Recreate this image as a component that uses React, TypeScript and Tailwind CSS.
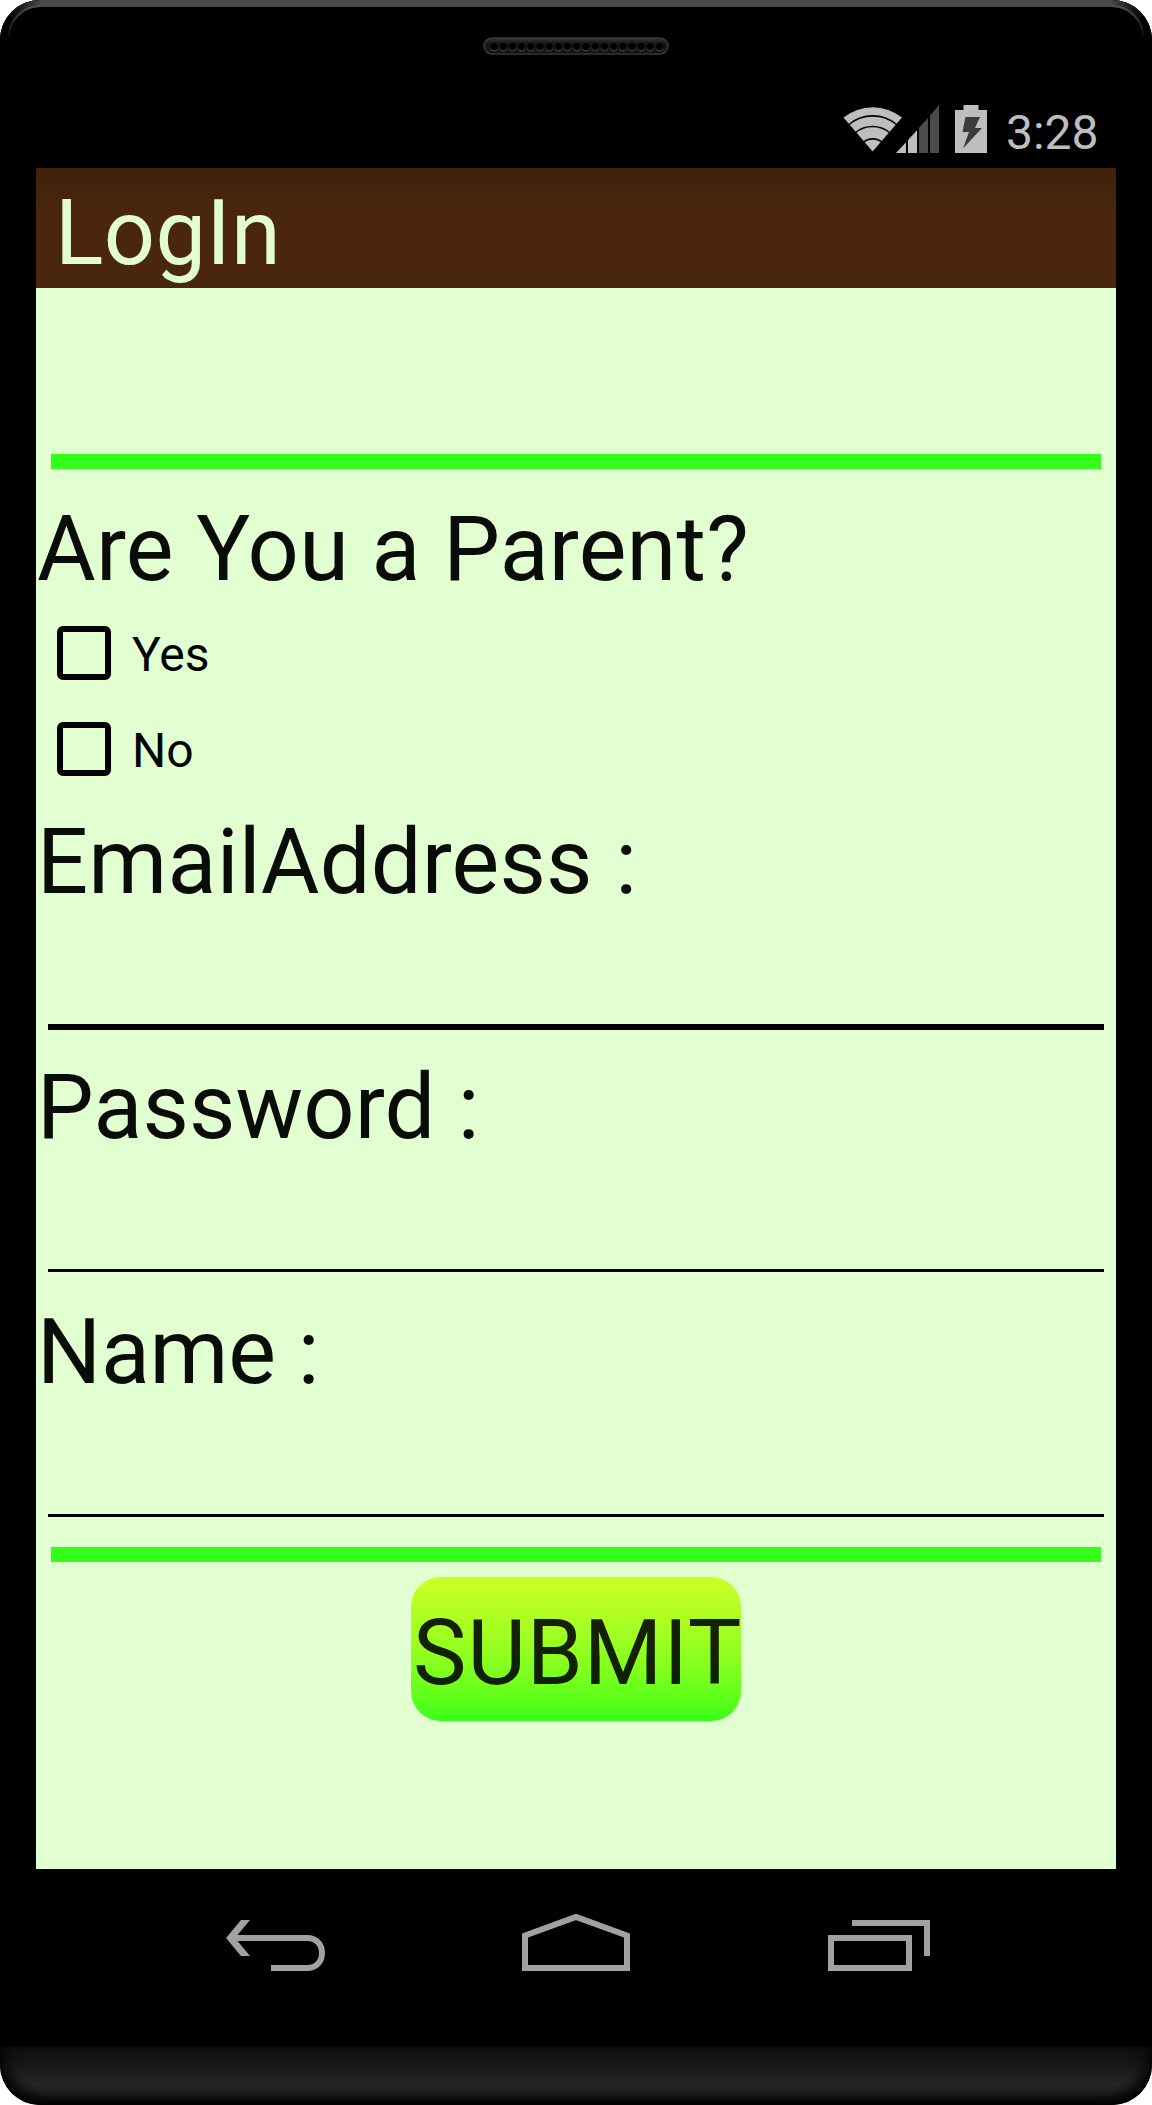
import React from "react";

function Speaker() {
  return (
    <svg width="186" height="18" viewBox="0 0 186 18">
      <defs>
        <linearGradient id="sp" x1="0" y1="0" x2="0" y2="1">
          <stop offset="0" stopColor="#383838" />
          <stop offset="0.3" stopColor="#1a1a1a" />
          <stop offset="1" stopColor="#111" />
        </linearGradient>
        <linearGradient id="rim" x1="0" y1="0" x2="0" y2="1">
          <stop offset="0.3" stopColor="#000" />
          <stop offset="1" stopColor="#555" />
        </linearGradient>
      </defs>
      <rect x="1" y="1" width="184" height="16" rx="8" fill="url(#sp)" stroke="#363636" strokeWidth="1.6" />
      {Array.from({ length: 19 }, (_, i) => (
        <circle key={i} cx={11 + i * 9.2} cy="10.3" r="3.7" fill="#000" stroke="url(#rim)" strokeWidth="1" />
      ))}
    </svg>
  );
}

function CornerBevel({ className }: { className: string }) {
  return (
    <svg width="40" height="44" viewBox="0 0 40 44" className={`absolute top-0 ${className}`}>
      <defs>
        <linearGradient id="bevel" x1="0" y1="0" x2="1" y2="0">
          <stop offset="0.2" stopColor="#000" />
          <stop offset="1" stopColor="#484848" />
        </linearGradient>
        <linearGradient id="bevelEdge" x1="0" y1="0" x2="0" y2="1">
          <stop offset="0" stopColor="#505050" />
          <stop offset="1" stopColor="#000" />
        </linearGradient>
      </defs>
      <rect width="40" height="44" fill="#000" />
      <path d="M0 40A40 40 0 0 1 40 0V7A33 33 0 0 0 7 40Z" fill="url(#bevel)" />
      <path d="M8.5 40A31.5 33 0 0 1 40 6" fill="none" stroke="url(#bevelEdge)" strokeWidth="2" />
    </svg>
  );
}

function StatusIcons() {
  return (
    <svg width="148" height="52" viewBox="840 102 148 52">
      <path d="M843.5 117.5A47 47 0 0 1 902 117.5L872.6 151.5Z" fill="#bebebe" />
      <g fill="none" stroke="#000" strokeWidth="1.6">
        <path d="M849 124.5A37 37 0 0 1 896.5 124.5" />
        <path d="M855.5 132.5A27 27 0 0 1 889.5 132.5" />
        <path d="M863 142.5A15 15 0 0 1 882.5 142.5" />
      </g>
      <path d="M896 153L906 142.2V153Z M908 140L917 130.2V153H908Z" fill="#bebebe" />
      <path d="M919 127.8L928 118V153H919Z M930 115.7L939 105V153H930Z" fill="#4b4b4b" />
      <path d="M955 110H963.5V105H978.5V110H987V153H955Z" fill="#bebebe" />
      <path d="M965.5 117H980L975 128H982L963 148.5L969 132H962.5Z" fill="#3b3b3b" />
    </svg>
  );
}

function CheckRow({ label }: { label: string }) {
  return (
    <label className="flex h-24 items-center pl-[21px]">
      <span className="h-[54px] w-[54px] rounded-[6px] border-[6px] border-black" />
      <span className="ml-[21px] mt-[3px] text-[48px] leading-[56px] text-black">{label}</span>
    </label>
  );
}

function Heading({ children, className = "" }: { children: React.ReactNode; className?: string }) {
  return (
    <div className={`whitespace-pre pl-px text-[90px] leading-[106px] text-[#0a0c09] ${className}`}>{children}</div>
  );
}

export default function App() {
  return (
    <div className="h-[2105px] w-[1152px] bg-white font-['Roboto',sans-serif]">
      <div className="relative flex h-full flex-col items-center overflow-hidden rounded-[40px] bg-black shadow-[inset_0_7px_0_0_#4a4a4a]">
        <CornerBevel className="left-0" />
        <CornerBevel className="right-0 -scale-x-100" />
        <div className="mt-[37px] h-[18px]">
          <Speaker />
        </div>
        <div className="mt-[47px] flex h-[66px] w-[1080px] items-start pl-[804px]">
          <StatusIcons />
          <span className="ml-[18px] mt-[3px] text-[48px] leading-[56px] text-[#bebebe]">3:28</span>
        </div>
        <main className="flex h-[1701px] w-[1080px] shrink-0 flex-col bg-[#e1ffd1]">
          <header className="h-[120px] bg-linear-to-b from-[#40200b] via-[#4a260d] via-35% to-[#4a260d] pl-[19px] pt-[13px] text-[90px] leading-[106px] tracking-[0.3px] text-[#e1ffd1]">
            LogIn
          </header>
          <div className="mx-[15px] mt-[166px] h-[15px] bg-[#33ff1a]" />
          <Heading className="mt-[28px] tracking-[0.2px]">Are You a Parent?</Heading>
          <div className="mt-[2px]">
            <CheckRow label="Yes" />
            <CheckRow label="No" />
          </div>
          <Heading className="mt-[13px] tracking-[0.2px]">EmailAddress :</Heading>
          <input aria-label="Email" className="mx-[12px] h-[114px] border-b-[6px] border-black bg-transparent text-[48px] outline-none" />
          <Heading className="mt-[25px] tracking-[0.1px]">Password :</Heading>
          <input aria-label="Password" type="password" className="mx-[12px] h-[111px] border-b-[3px] border-black bg-transparent text-[48px] outline-none" />
          <Heading className="mt-[28px] tracking-[-0.3px]">Name :</Heading>
          <input aria-label="Name" className="mx-[12px] h-[111px] border-b-[3px] border-black bg-transparent text-[48px] outline-none" />
          <div className="mx-[15px] mt-[30px] h-[15px] bg-[#33ff1a]" />
          <button className="mt-[15px] h-[144px] w-[330px] self-center whitespace-nowrap rounded-[30px] bg-linear-to-b from-[#ccff26] to-[#33ff1a] pl-[2px] pt-[10px] text-[90px] leading-[106px] tracking-[1px] text-[#000000de]">
            SUBMIT
          </button>
        </main>
        <nav className="flex h-[178px] w-full shrink-0 items-start">
          <svg width="1152" height="120" viewBox="0 1869 1152 120" fill="none" stroke="#a1a1a1" strokeWidth="6">
            <path d="M234 1938H307C316 1938 322 1944 322 1953S316 1968 307 1968H271" />
            <path d="M226 1938L241 1920H250L235 1938L250 1956H241Z" fill="#a1a1a1" stroke="none" />
            <path d="M525 1968V1935.5L576 1917L627 1935.5V1968Z" />
            <path d="M831 1938H909V1968H831Z M852 1923H927V1956" />
          </svg>
        </nav>
        <div className="h-[58px] w-full shrink-0 rounded-b-[40px] bg-linear-to-b from-[#0c0c0c] via-[#262626] via-65% to-[#202020] shadow-[inset_12px_-14px_14px_-10px_#000,inset_-12px_-14px_14px_-10px_#000]" />
      </div>
    </div>
  );
}
